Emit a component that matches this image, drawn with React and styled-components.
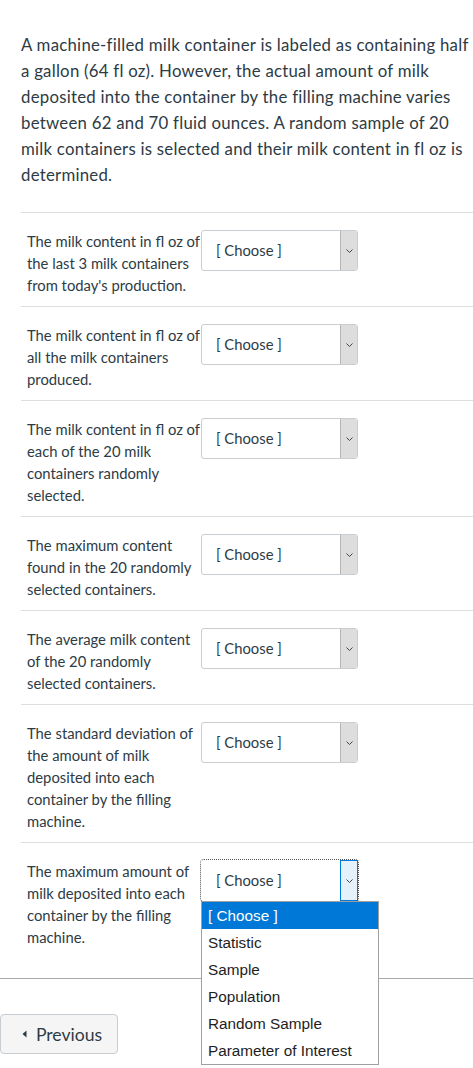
import React from 'react';
import styled, { createGlobalStyle } from 'styled-components';

const GlobalStyle = createGlobalStyle`
  html, body {
    margin: 0;
    padding: 0;
    background: #fff;
  }
  body {
    font-family: Lato, "Open Sans", sans-serif;
    color: #2d3b45;
  }
`;

const Page = styled.div`
  width: 473px;
  overflow: hidden;
  padding-top: 32px;
`;

const Question = styled.div`
  padding-left: 21px;
`;

const Intro = styled.p`
  margin: 0 0 24px 0;
  font-size: 16.8px;
  letter-spacing: 0.25px;
  line-height: 26px;
  padding-right: 2px;
`;

const Row = styled.div`
  display: flex;
  align-items: flex-start;
  border-top: 1px solid #dedede;
  padding: 17px 0 10px 6px;
`;

const Label = styled.div`
  width: 174px;
  flex: none;
  font-size: 14.8px;
  line-height: 22px;
`;

const SelectWrap = styled.div`
  position: relative;
`;

const SelectBox = styled.div`
  box-sizing: border-box;
  width: 157px;
  height: 41px;
  display: flex;
  align-items: stretch;
  border: 1px solid ${(p) => (p.$focused ? 'transparent' : '#c7cdd1')};
  outline: ${(p) => (p.$focused ? '1px dotted #555' : 'none')};
  border-radius: 3px;
  background: #fff;
`;

const SelectText = styled.div`
  flex: 1;
  box-sizing: border-box;
  padding: 0 0 0 14px;
  line-height: 39px;
  font-size: 14.8px;
  white-space: nowrap;
`;

const ArrowPart = styled.div`
  box-sizing: border-box;
  width: 17px;
  display: flex;
  align-items: center;
  justify-content: center;
  background: ${(p) => (p.$focused ? '#e5f1fb' : '#dddddd')};
  border-left: 1px solid ${(p) => (p.$focused ? '#0078d7' : '#b5b5b5')};
  border-radius: 0 2px 2px 0;
`;

const FocusArrow = styled(ArrowPart)`
  border: 1px solid #0078d7;
  border-radius: 0;
  margin: -1px -1px -1px 0;
  width: 18px;
`;

const Menu = styled.ul`
  position: absolute;
  top: 41px;
  left: 0;
  width: 178px;
  box-sizing: border-box;
  margin: 0;
  padding: 0;
  list-style: none;
  background: #fff;
  border: 1px solid #a0a0a0;
  font-family: "Liberation Sans", Arial, sans-serif;
  font-size: 15.3px;
  color: #1e1e1e;
  z-index: 2;
`;

const Option = styled.li`
  height: 27px;
  line-height: 27px;
  padding-left: 6px;
  white-space: nowrap;
  background: ${(p) => (p.$active ? '#0078d7' : 'transparent')};
  color: ${(p) => (p.$active ? '#fff' : 'inherit')};
`;

const Footer = styled.div`
  margin-top: 20px;
  border-top: 1px solid #a9a9a9;
  padding-top: 35px;
  height: 90px;
`;

const PrevButton = styled.button`
  box-sizing: border-box;
  width: 118px;
  height: 40px;
  display: flex;
  align-items: center;
  justify-content: center;
  gap: 9px;
  background: #f5f5f5;
  border: 1px solid #c7cdd1;
  border-radius: 4px;
  font-family: Lato, sans-serif;
  font-size: 17.6px;
  color: #2d3b45;
  padding: 0 0 0 6px;
`;

const Chevron = () => (
  <svg width="9" height="6" viewBox="0 0 9 6">
    <path d="M1.5 1.5 L4.5 4.5 L7.5 1.5" fill="none" stroke="#444" strokeWidth="1" />
  </svg>
);

const Caret = () => (
  <svg width="5" height="8" viewBox="0 0 5 8">
    <path d="M4.5 0.5 L4.5 7.5 L0.5 4 Z" fill="#2d3b45" />
  </svg>
);

const rows = [
  "The milk content in fl oz of the last 3 milk containers from today's production.",
  'The milk content in fl oz of all the milk containers produced.',
  'The milk content in fl oz of each of the 20 milk containers randomly selected.',
  'The maximum content found in the 20 randomly selected containers.',
  'The average milk content of the 20 randomly selected containers.',
  'The standard deviation of the amount of milk deposited into each container by the filling machine.',
  'The maximum amount of milk deposited into each container by the filling machine.',
];

const options = ['[ Choose ]', 'Statistic', 'Sample', 'Population', 'Random Sample', 'Parameter of Interest'];

const App = () => {
  return (
    <Page>
      <GlobalStyle />
      <Question>
        <Intro>
          A machine-filled milk container is labeled as containing half a gallon (64 fl oz). However, the actual
          amount of milk deposited into the container by the filling machine varies between 62 and 70 fluid
          ounces. A random sample of 20 milk containers is selected and their milk content in fl oz is determined.
        </Intro>
        {rows.map((text, i) => {
          const open = i === rows.length - 1;
          const Arrow = open ? FocusArrow : ArrowPart;
          return (
            <Row key={i}>
              <Label>{text}</Label>
              <SelectWrap>
                <SelectBox $focused={open}>
                  <SelectText>[ Choose ]</SelectText>
                  <Arrow $focused={open}>
                    <Chevron />
                  </Arrow>
                </SelectBox>
                {open && (
                  <Menu>
                    {options.map((o, j) => (
                      <Option key={o} $active={j === 0}>
                        {o}
                      </Option>
                    ))}
                  </Menu>
                )}
              </SelectWrap>
            </Row>
          );
        })}
      </Question>
      <Footer>
        <PrevButton>
          <Caret />
          Previous
        </PrevButton>
      </Footer>
    </Page>
  );
};

export default App;
